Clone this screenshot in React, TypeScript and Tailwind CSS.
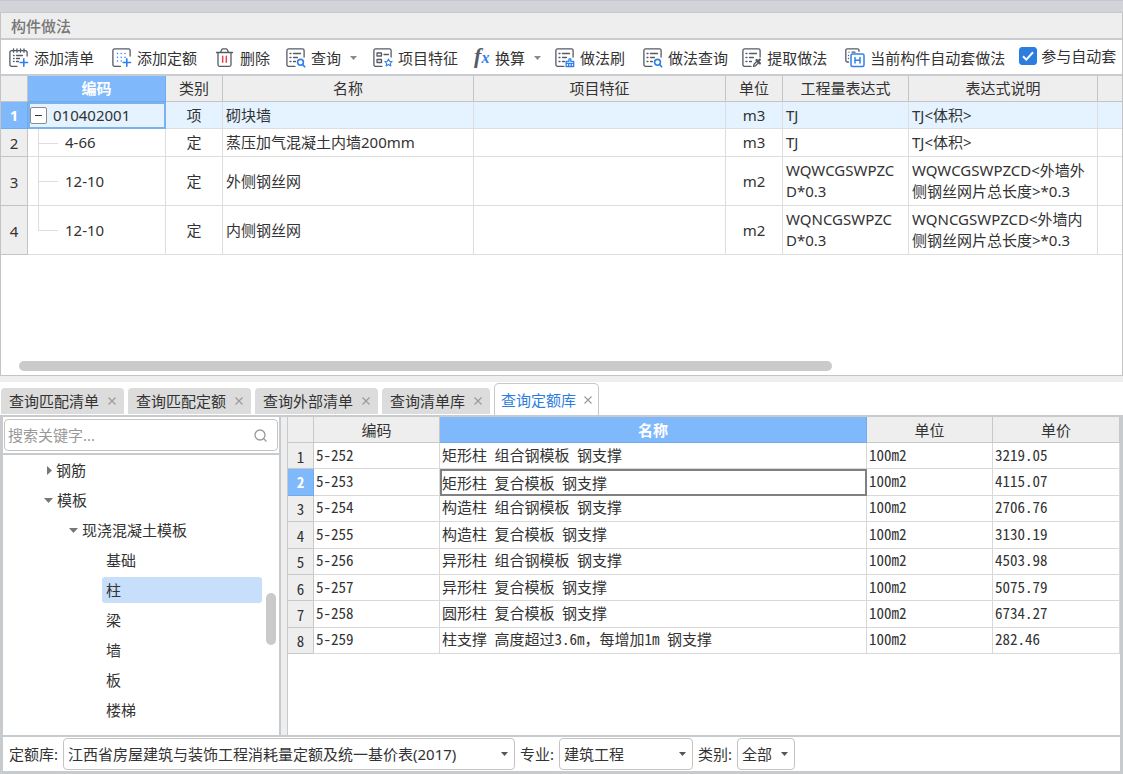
import { useState } from 'react';
import type { ReactNode } from 'react';

const INK = '#555b66';
const BLUE = '#2f80ed';

function Icon({ children }: { children: ReactNode }) {
  return (
    <svg width="20" height="20" viewBox="0 0 20 20" fill="none" stroke={INK} strokeWidth="1.3" strokeLinecap="round" strokeLinejoin="round" className="shrink-0" aria-hidden="true">
      {children}
    </svg>
  );
}

const sheetLines = <path d="M4 5.500h1M7.500 5.500h7M4 9.500h1M7.500 9.500h4M4 13.500h1M7.500 13.500h2" />;
const sheetFrame = <path d="M9 18.3H2.5a1.6 1.6 0 0 1-1.6-1.6V2.5A1.6 1.6 0 0 1 2.5.9h14a1.6 1.6 0 0 1 1.6 1.6V9" />;

const AddListIcon = () => (
  <Icon>
    <path d="M8 18.3H2.5a1.6 1.6 0 0 1-1.6-1.6V4.3a1.6 1.6 0 0 1 1.6-1.6h14a1.6 1.6 0 0 1 1.6 1.6V8M4.5 .8v3.4M8 .8v3.4M11.5 .8v3.4M15 .8v3.4" />
    <path d="M4.5 7.5h.6M7.5 7.5h6M4.5 10.5h.6M7.5 10.5h3M4.5 13.5h.6M7.5 13.5h2" />
    <path d="M14.8 10.8v7.4M11.1 14.5h7.4" stroke={BLUE} strokeWidth="1.6" />
  </Icon>
);
const AddQuotaIcon = () => (
  <Icon>
    <path d="M8.5 18.3H2.5a1.6 1.6 0 0 1-1.6-1.6V2.5A1.6 1.6 0 0 1 2.5.9h14a1.6 1.6 0 0 1 1.6 1.6V8" />
    <path d="M5.5 5.5h.01M9.2 5.5h.01M13 5.5h.01M5.5 9.3h.01M9.2 9.3h.01M13 9.3h.01M5.5 13h.01M9.2 13h.01" stroke={BLUE} strokeWidth="1.5" />
    <path d="M14.8 10.8v7.4M11.1 14.5h7.4" stroke={BLUE} strokeWidth="1.6" />
  </Icon>
);
const TrashIcon = () => (
  <Icon>
    <path d="M1.5 4.5h16M5.500 4.300l1.200-2.600A1.500 1.500 0 0 1 8 .9h3a1.500 1.500 0 0 1 1.300.8l1.200 2.600M3 4.800v12a1.500 1.500 0 0 0 1.500 1.500h10a1.500 1.500 0 0 0 1.500-1.500v-12" />
    <path d="M7.7 8.3v6M11.3 8.3v6" stroke="#e5484d" strokeWidth="1.5" />
  </Icon>
);
const SearchSheetIcon = () => (
  <Icon>
    {sheetFrame}
    {sheetLines}
    <circle cx="14.5" cy="14.3" r="2.9" stroke={BLUE} strokeWidth="1.6" />
    <path d="M16.7 16.6l2 2.2" stroke={BLUE} strokeWidth="1.6" />
  </Icon>
);
const FeatureIcon = () => (
  <Icon>
    {sheetFrame}
    <path d="M4 5h4.500v3H4zM4 11.500h4.500v3H4zM11 6.500h4.500" />
    <path d="M15.500 11l1.100 2.300 2.500.3-1.800 1.700.5 2.600-2.300-1.300-2.300 1.300.5-2.600-1.800-1.700 2.500-.3z" stroke={BLUE} strokeWidth="1.1" />
  </Icon>
);
const FxIcon = () => (
  <span className="flex w-5 shrink-0 items-baseline pl-1 font-['Liberation_Serif',serif] font-bold italic" aria-hidden="true">
    <span className="text-[22px] text-[#555b66]">f</span>
    <span className="text-base text-[#2f80ed]">x</span>
  </span>
);
const BrushIcon = () => (
  <Icon>
    {sheetFrame}
    {sheetLines}
    <path d="M14 10.800h1.800v2.500h2.900v5.200h-7.600v-5.200H14zM11.100 15.300h7.600M13.600 15.500v2.800M16.200 15.500v2.800" stroke={BLUE} />
  </Icon>
);
const ExtractIcon = () => (
  <Icon>
    {sheetFrame}
    {sheetLines}
    <path d="M11.500 18.300l.5-2 3.200-3.300 1.600 1.600-3.300 3.200z" />
    <path d="M14.500 12l3.400 3.400M15.800 13.600l2-2" strokeWidth="2.2" />
  </Icon>
);
const AutoIcon = () => (
  <Icon>
    <path d="M3.500 14H2.300A1.500 1.500 0 0 1 .8 12.500V2.300A1.500 1.500 0 0 1 2.300.8h10.200A1.500 1.500 0 0 1 14 2.300v1M4 4.200h.01M7 4.200h3M3.500 7.500h.01M3.500 10.500h.01" />
    <rect x="6" y="6" width="13" height="12.500" rx="1.500" stroke={BLUE} strokeWidth="1.5" />
    <path d="M10 9.500v5.500M15 9.500v5.500M10 12.300h5" stroke={BLUE} strokeWidth="1.5" />
  </Icon>
);

function Caret({ color = '#8a8a8a' }: { color?: string }) {
  return (
    <svg width="7" height="4" viewBox="0 0 7 4" fill={color} className="shrink-0" aria-hidden="true">
      <path d="M0 0h7L3.500 4z" />
    </svg>
  );
}

const tools = [
  { label: '添加清单', icon: <AddListIcon />, space: 'mr-[18px]' },
  { label: '添加定额', icon: <AddQuotaIcon />, space: 'mr-[18px]' },
  { label: '删除', icon: <TrashIcon />, space: 'mr-4' },
  { label: '查询', icon: <SearchSheetIcon />, space: 'mr-4', menu: true },
  { label: '项目特征', icon: <FeatureIcon />, space: 'mr-3' },
  { label: '换算', icon: <FxIcon />, space: 'mr-[14px]', menu: true },
  { label: '做法刷', icon: <BrushIcon />, space: 'mr-[18px]' },
  { label: '做法查询', icon: <SearchSheetIcon />, space: 'mr-[14px]' },
  { label: '提取做法', icon: <ExtractIcon />, space: 'mr-[18px]' },
  { label: '当前构件自动套做法', icon: <AutoIcon />, space: 'mr-[14px]' },
];

function Toolbar() {
  const [auto, setAuto] = useState(true);
  return (
    <div className="flex h-[34px] items-center overflow-hidden bg-white pl-2 whitespace-nowrap">
      {tools.map((t) => (
        <button key={t.label} type="button" className={`flex h-6 shrink-0 items-center gap-[5px] pt-0.5 ${t.space}`}>
          {t.icon}
          <span>{t.label}</span>
          {t.menu && (
            <span className="pl-1">
              <Caret />
            </span>
          )}
        </button>
      ))}
      <label className="flex shrink-0 items-center gap-1 pb-0.5">
        <span className="relative flex">
          <input type="checkbox" checked={auto} onChange={(e) => setAuto(e.target.checked)} className="size-[18px] appearance-none rounded-[3px] border border-[#2b7de0] bg-white checked:bg-[#2b7de0]" />
          {auto && (
            <svg viewBox="0 0 18 18" fill="none" stroke="#fff" strokeWidth="2" className="pointer-events-none absolute inset-0 size-[18px]" aria-hidden="true">
              <path d="M4 9.300l3.300 3.300L14 5.300" />
            </svg>
          )}
        </span>
        <span>参与自动套</span>
      </label>
    </div>
  );
}

const works = [
  { code: '010402001', kind: '项', name: '砌块墙', unit: 'm3', expr: 'TJ', note: 'TJ<体积>', h: 'h-[27px]' },
  { code: '4-66', kind: '定', name: '蒸压加气混凝土内墙200mm', unit: 'm3', expr: 'TJ', note: 'TJ<体积>', h: 'h-7' },
  { code: '12-10', kind: '定', name: '外侧钢丝网', unit: 'm2', expr: 'WQWCGSWPZC\nD*0.3', note: 'WQWCGSWPZCD<外墙外\n侧钢丝网片总长度>*0.3', h: 'h-[49px]' },
  { code: '12-10', kind: '定', name: '内侧钢丝网', unit: 'm2', expr: 'WQNCGSWPZC\nD*0.3', note: 'WQNCGSWPZCD<外墙内\n侧钢丝网片总长度>*0.3', h: 'h-[49px]' },
];

function WorksTable() {
  const head = 'border-r border-b border-[#c4c4c4] bg-[#eeeeee] p-0 font-normal';
  const cell = 'border-r border-b border-[#dedede] px-[3px] py-0';
  return (
    <table className="w-full table-fixed border-separate border-spacing-0 leading-[21px]">
      <colgroup>
        <col className="w-[27px]" />
        <col className="w-[138px]" />
        <col className="w-[57px]" />
        <col className="w-[251px]" />
        <col className="w-[252px]" />
        <col className="w-[57px]" />
        <col className="w-[126px]" />
        <col className="w-[189px]" />
        <col />
      </colgroup>
      <thead>
        <tr className="h-[26px]">
          <th className={head} />
          <th className="border-r border-b border-[#6fabed] bg-[#7fb9fb] p-0 font-bold text-white">编码</th>
          {['类别', '名称', '项目特征', '单位', '工程量表达式', '表达式说明'].map((h) => (
            <th key={h} className={head}>{h}</th>
          ))}
          <th className="border-b border-[#c4c4c4] bg-[#eeeeee] p-0" />
        </tr>
      </thead>
      <tbody>
        {works.map((r, i) => (
          <tr key={i} className={`${r.h} ${i === 0 ? 'bg-[#e4f3ff]' : 'bg-white'}`}>
            <th className={i === 0 ? 'border-r border-b border-[#6fabed] bg-[#7fb9fb] p-0 font-bold text-white' : `${head} pt-0.5`}>{i + 1}</th>
            {i === 0 ? (
              <td className="border-2 border-[#7ab2ee] p-0">
                <div className="flex items-center gap-1.5">
                  <button type="button" aria-label="收起" className="flex size-[17px] items-center justify-center rounded-[2px] border border-[#8c8c8c] bg-white">
                    <span className="h-px w-[7px] bg-[#333]" />
                  </button>
                  {r.code}
                </div>
              </td>
            ) : (
              <td className={`${cell} relative pl-[37px]`}>
                <span className={`absolute top-0 left-[10px] w-px bg-[#dedede] ${i === works.length - 1 ? 'h-1/2' : 'h-full'}`} />
                <span className="absolute top-1/2 left-[10px] h-px w-5 bg-[#dedede]" />
                {r.code}
              </td>
            )}
            <td className={`${cell} text-center`}>{r.kind}</td>
            <td className={cell}>{r.name}</td>
            <td className={cell} />
            <td className={`${cell} text-center`}>{r.unit}</td>
            <td className={`${cell} whitespace-pre-line`}>{r.expr}</td>
            <td className={`${cell} whitespace-pre-line`}>{r.note}</td>
            <td className="border-b border-[#dedede]" />
          </tr>
        ))}
      </tbody>
    </table>
  );
}

const tabs = ['查询匹配清单', '查询匹配定额', '查询外部清单', '查询清单库', '查询定额库'];

function Tabs() {
  return (
    <div className="flex h-[33px] items-end gap-1 bg-white pl-px" role="tablist">
      {tabs.map((t, i) => {
        const active = i === tabs.length - 1;
        return (
          <div
            key={t}
            className={
              active
                ? 'flex h-8 items-center gap-2 rounded-t-[5px] border border-b-0 border-[#c4c8cc] bg-white px-1.5 text-[#2b7de0]'
                : 'mb-px flex h-[26px] items-center gap-[9px] rounded-t-[4px] bg-[#dcdcdc] px-2'
            }
          >
            <button type="button" role="tab" aria-selected={active}>{t}</button>
            <button type="button" aria-label="关闭">
              <svg width="8" height="8" viewBox="0 0 8 8" stroke="#999" strokeWidth="1.1" fill="none" aria-hidden="true">
                <path d="M.5 .5l7 7M7.500 .5l-7 7" />
              </svg>
            </button>
          </div>
        );
      })}
    </div>
  );
}

const tree = [
  { label: '钢筋', pad: 'pl-[44px]', state: 'closed' },
  { label: '模板', pad: 'pl-[41px]', state: 'open' },
  { label: '现浇混凝土模板', pad: 'pl-[66px]', state: 'open' },
  { label: '基础', pad: 'pl-[99px]', state: 'leaf' },
  { label: '柱', pad: 'pl-[99px]', state: 'leaf' },
  { label: '梁', pad: 'pl-[99px]', state: 'leaf' },
  { label: '墙', pad: 'pl-[99px]', state: 'leaf' },
  { label: '板', pad: 'pl-[99px]', state: 'leaf' },
  { label: '楼梯', pad: 'pl-[99px]', state: 'leaf' },
];

function TreePanel() {
  return (
    <div className="flex w-[278px] shrink-0 flex-col border-r-2 border-[#c8cbce] bg-white">
      <div className="border-b-2 border-[#c8cbce] px-px py-0.5">
        <label className="flex h-8 items-center rounded-[4px] border border-[#c4c4c4] pr-2.5 pl-[3px]">
          <input type="text" aria-label="搜索" placeholder="搜索关键字..." className="min-w-0 flex-1 bg-transparent outline-none placeholder:text-[#999]" />
          <svg width="13" height="13" viewBox="0 0 13 13" fill="none" stroke="#999" strokeWidth="1.3" aria-hidden="true">
            <circle cx="6" cy="6" r="5" />
            <path d="M9.500 9.500l3 3" />
          </svg>
        </label>
      </div>
      <div className="flex flex-1">
        <ul className="flex-1">
          {tree.map((n) => (
            <li key={n.label} className={`flex h-[30px] items-center gap-1 ${n.pad}`}>
              {n.state === 'closed' && (
                <svg width="5" height="9" viewBox="0 0 5 9" fill="#777" aria-hidden="true">
                  <path d="M0 0l5 4.500L0 9z" />
                </svg>
              )}
              {n.state === 'open' && (
                <svg width="9" height="5" viewBox="0 0 9 5" fill="#777" aria-hidden="true">
                  <path d="M0 0h9L4.500 5z" />
                </svg>
              )}
              <button type="button" className={n.state !== 'leaf' ? '' : n.label === '柱' ? 'h-[26px] flex-1 rounded-[3px] bg-[#c8dffb] px-1 text-left' : 'px-1'}>
                {n.label}
              </button>
            </li>
          ))}
        </ul>
        <div className="w-[17px] pt-[138px] pl-1">
          <div className="h-[52px] w-2.5 rounded-full bg-[#cacaca]" />
        </div>
      </div>
    </div>
  );
}

const quotas = [
  ['5-252', '矩形柱 组合钢模板 钢支撑', '3219.05'],
  ['5-253', '矩形柱 复合模板 钢支撑', '4115.07'],
  ['5-254', '构造柱 组合钢模板 钢支撑', '2706.76'],
  ['5-255', '构造柱 复合模板 钢支撑', '3130.19'],
  ['5-256', '异形柱 组合钢模板 钢支撑', '4503.98'],
  ['5-257', '异形柱 复合模板 钢支撑', '5075.79'],
  ['5-258', '圆形柱 复合模板 钢支撑', '6734.27'],
  ['5-259', '柱支撑 高度超过3.6m，每增加1m 钢支撑', '282.46'],
];

function QuotaTable() {
  const head = 'border-r border-b border-[#c8c8c8] bg-[#eeeeee] p-0 font-normal';
  const cell = 'border-r border-b border-[#d8d8d8] px-0.5 pt-0 pb-0.5';
  return (
    <table className="h-[237px] w-full table-fixed border-separate border-spacing-0 leading-5">
      <colgroup>
        <col className="w-[26px]" />
        <col className="w-[126px]" />
        <col />
        <col className="w-[126px]" />
        <col className="w-[127px]" />
      </colgroup>
      <thead>
        <tr className="h-[26px]">
          <th className={head} />
          <th className={head}>编码</th>
          <th className="border-r border-b border-[#6fabed] bg-[#7fb9fb] p-0 font-bold text-white">名称</th>
          <th className={head}>单位</th>
          <th className={head}>单价</th>
        </tr>
      </thead>
      <tbody className="font-['Noto_Sans_Mono_CJK_SC','Liberation_Mono','Noto_Sans_CJK_SC',monospace]">
        {quotas.map(([code, name, price], i) => (
          <tr key={code} className="h-[26px]">
            <th className={i === 1 ? 'border-r border-b border-[#6fabed] bg-[#7fb9fb] p-0 font-bold text-white' : `${head} pt-0.5`}>{i + 1}</th>
            <td className={cell}>{code}</td>
            <td className={i === 1 ? 'border-2 border-[#808080] p-0' : cell}>{name}</td>
            <td className={cell}>100m2</td>
            <td className={cell}>{price}</td>
          </tr>
        ))}
      </tbody>
    </table>
  );
}

function Picker({ id, label, value, width }: { id: string; label: string; value: string; width: string }) {
  return (
    <div className="flex items-center gap-[5px]">
      <label htmlFor={id} className="whitespace-nowrap">{label}</label>
      <div className={`relative flex items-center ${width}`}>
        <select id={id} className="h-8 w-full appearance-none rounded-[4px] border border-[#c4c4c4] bg-white px-1 outline-none">
          <option>{value}</option>
        </select>
        <span className="pointer-events-none absolute right-[7px] flex">
          <Caret color="#555" />
        </span>
      </div>
    </div>
  );
}

export default function App() {
  return (
    <div className="flex min-h-screen flex-col bg-[#eeeeee] font-['Noto_Sans','Noto_Sans_CJK_SC',sans-serif] text-[15px] leading-5 text-[#333]">
      <div className="h-[13px] border-y border-[#c5c8ce] bg-[#d2d4da]" />
      <section className="flex flex-col border-x border-b border-[#c4c4c4]">
        <h1 className="flex h-[25px] items-center bg-[#eeeeee] pl-2.5 font-medium text-[#777]">构件做法</h1>
        <div className="border-y-2 border-[#c8cbd0]">
          <Toolbar />
        </div>
        <div className="flex min-h-[299px] flex-col justify-between overflow-hidden bg-white pb-1">
          <WorksTable />
          <div className="pr-[290px] pl-[18px]">
            <div className="h-2.5 rounded-full bg-[#cacaca]" />
          </div>
        </div>
      </section>
      <div className="h-1.5" />
      <Tabs />
      <section className="flex flex-1 flex-col border-t-2 border-r-[3px] border-b-[3px] border-l-[3px] border-[#c8cbce]">
        <div className="flex flex-1">
          <TreePanel />
          <div className="w-1.5 shrink-0 bg-[#eeeeee]" />
          <div className="min-w-0 flex-1 border-l border-[#c8cbce] bg-white">
            <QuotaTable />
          </div>
        </div>
        <div className="flex h-9 items-center gap-[5px] border-t-2 border-[#c8cbce] bg-white pl-1.5">
          <Picker id="library" label="定额库:" value="江西省房屋建筑与装饰工程消耗量定额及统一基价表(2017)" width="w-[452px]" />
          <Picker id="major" label="专业:" value="建筑工程" width="w-[134px]" />
          <Picker id="kind" label="类别:" value="全部" width="w-[58px]" />
        </div>
      </section>
    </div>
  );
}
